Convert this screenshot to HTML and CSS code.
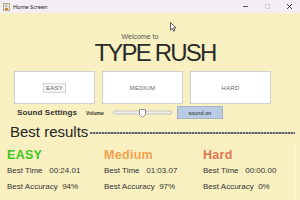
FILE: index.html
```html
<!DOCTYPE html>
<html>
<head>
<meta charset="utf-8">
<link rel="stylesheet" href="styles.css">
</head>
<body>
<div class="window">
  <div class="titlebar">
    <svg class="app-icon" width="7" height="8" viewBox="0 0 7 8">
      <rect x="0.5" y="0.5" width="6" height="7" fill="#e9e3d9" stroke="#b9aa88" stroke-width="1"/>
      <path d="M2 5 h3 v2 h-3z" fill="#d08a3a"/>
      <path d="M3 1.5 q1 1 0 2.5" stroke="#5a79b8" stroke-width="0.8" fill="none"/>
    </svg>
    <span class="title-text">Home Screen</span>
    <span class="spacer"></span>
    <span class="ctrl ctrl-min"></span>
    <span class="ctrl ctrl-max"></span>
    <svg class="ctrl-close" width="7" height="7" viewBox="0 0 7 7"><path d="M1 1 L6 6 M6 1 L1 6" stroke="#333" stroke-width="0.9"/></svg>
  </div>
  <main class="content">
    <div class="welcome">Welcome to</div>
    <h1 class="brand">TYPE RUSH</h1>
    <div class="modes">
      <div class="mode"><span class="mode-label focused">EASY</span></div>
      <div class="mode"><span class="mode-label">MEDIUM</span></div>
      <div class="mode"><span class="mode-label">HARD</span></div>
    </div>
    <div class="sound">
      <span class="sound-title">Sound Settings</span>
      <span class="volume">Volume</span>
      <svg class="slider" width="60" height="13" viewBox="0 0 60 13">
        <rect x="0.5" y="5" width="58" height="3" rx="1" fill="#efefef" stroke="#b8b8b8" stroke-width="0.8"/>
        <path d="M26.5 3.5 h6 v5 l-3 3 l-3 -3 z" fill="#fbfbfb" stroke="#7a7a7a" stroke-width="0.8"/>
      </svg>
      <span class="sound-btn">sound on</span>
    </div>
    <div class="best-head">
      <span class="best-title">Best results</span>
      <span class="dash"></span>
    </div>
    <div class="results">
      <div class="col">
        <div class="level easy">EASY</div>
        <div class="stat">Best Time&nbsp;&nbsp; 00:24.01</div>
        <div class="stat">Best Accuracy&nbsp; 94%</div>
      </div>
      <div class="col">
        <div class="level medium">Medium</div>
        <div class="stat">Best Time&nbsp;&nbsp; 01:03.07</div>
        <div class="stat">Best Accuracy&nbsp; 97%</div>
      </div>
      <div class="col">
        <div class="level hard">Hard</div>
        <div class="stat">Best Time&nbsp;&nbsp; 00:00.00</div>
        <div class="stat">Best Accuracy&nbsp; 0%</div>
      </div>
    </div>
  </main>
  <svg class="cursor" width="7" height="10" viewBox="0 0 7 10">
    <path d="M0.5 0.5 L0.5 8 L2.3 6.3 L3.6 9.2 L4.8 8.7 L3.6 5.9 L6 5.9 Z" fill="#fff" stroke="#222" stroke-width="0.7"/>
  </svg>
</div>
</body>
</html>
```
FILE: styles.css
```css
* { box-sizing: border-box; }
html, body { margin: 0; padding: 0; }
body {
  width: 300px;
  height: 200px;
  overflow: hidden;
  font-family: "Liberation Sans", Arial, sans-serif;
}
.window {
  position: relative;
  width: 300px;
  height: 200px;
  background: #f8f0c0;
  display: flex;
  flex-direction: column;
}
.titlebar {
  height: 13px;
  background: #f4edf3;
  display: flex;
  align-items: center;
  padding-left: 3px;
  padding-right: 7px;
}
.app-icon { display: block; }
.title-text {
  font-family: "Noto Sans", "Liberation Sans", sans-serif;
  font-size: 5.5px;
  color: #222;
  margin-left: 3px;
}
.spacer { flex: 1; }
.ctrl-min {
  width: 5px;
  height: 1px;
  background: #555;
  margin-right: 17px;
}
.ctrl-max {
  width: 5px;
  height: 5px;
  border: 1px solid #d8d2d8;
  margin-right: 16px;
}
.ctrl-close { display: block; }

.content {
  flex: 1;
  display: flex;
  flex-direction: column;
  padding-top: 20px;
}
.welcome {
  text-align: center;
  font-size: 7px;
  line-height: 8px;
  color: #555;
  margin-left: -20px;
}
.brand {
  margin: 0;
  text-align: center;
  font-weight: normal;
  font-size: 24px;
  line-height: 24px;
  letter-spacing: -1.8px;
  color: #2a2a2a;
  margin-left: 10px;
}
.modes {
  display: flex;
  gap: 7px;
  padding-left: 14px;
  margin-top: 6px;
}
.mode {
  width: 81px;
  height: 33px;
  background: #fff;
  border: 1px solid #cfcfcf;
  display: flex;
  align-items: center;
  justify-content: center;
}
.mode-label {
  font-size: 6px;
  color: #666;
  letter-spacing: 0.2px;
}
.mode-label.focused {
  border: 1px solid #d6d6d6;
  background: #f4f4f4;
  padding: 1px 2px;
}
.sound {
  display: flex;
  align-items: center;
  height: 13px;
  margin-top: 2px;
  padding-left: 17px;
}
.sound-title {
  font-size: 8px;
  font-weight: bold;
  color: #333;
  letter-spacing: 0.1px;
}
.volume {
  font-size: 5px;
  font-weight: bold;
  color: #333;
  margin-left: 9px;
}
.slider {
  display: block;
  margin-left: 9px;
}
.sound-btn {
  width: 46px;
  height: 13px;
  margin-left: 4px;
  background: #b8cde5;
  border: 1px solid #a9b4c2;
  font-size: 5.5px;
  color: #222;
  display: flex;
  align-items: center;
  justify-content: center;
}
.best-head {
  display: flex;
  align-items: center;
  margin-top: 5px;
  padding-left: 10px;
  padding-right: 5px;
}
.best-title {
  font-size: 15px;
  line-height: 16px;
  color: #222;
}
.dash {
  flex: 1;
  height: 2px;
  margin-left: 2px;
  margin-top: 2px;
  background: repeating-linear-gradient(90deg, #666 0 2px, #aaa 2px 3px);
}
.results {
  flex: 1;
  display: grid;
  grid-template-columns: 97px 99px 1fr;
  padding-left: 7px;
  margin-right: 4px;
  border-right: 1px solid #fbf6da;
}
.level {
  font-size: 12.5px;
  line-height: 14px;
  font-weight: bold;
  margin-top: 8px;
  letter-spacing: 0.3px;
}
.easy { color: #3ec522; }
.medium { color: #f4a14e; }
.hard { color: #e07552; }
.stat {
  font-size: 8px;
  line-height: 10px;
  color: #333;
  margin-top: 4px;
}
.stat + .stat { margin-top: 5.5px; }
.cursor {
  position: absolute;
  left: 170px;
  top: 22px;
}
```
